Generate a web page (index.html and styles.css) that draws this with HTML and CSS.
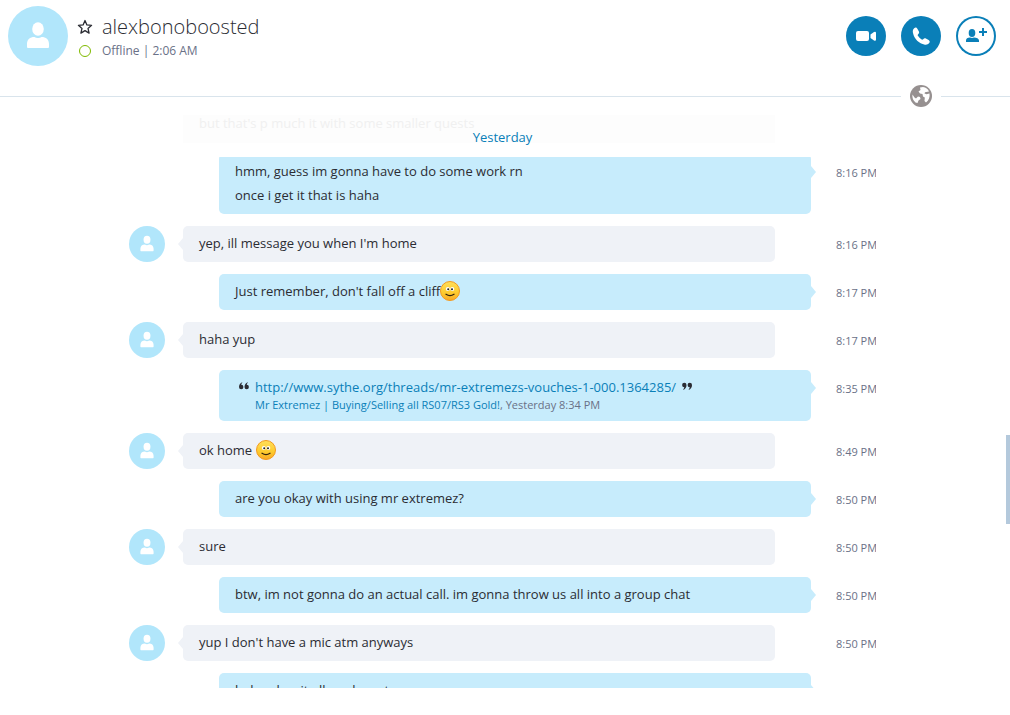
FILE: index.html
```html
<!DOCTYPE html>
<html lang="en">
<head>
    <meta charset="UTF-8">
    <meta name="viewport" content="width=device-width, initial-scale=1.0">
    <title>alexbonoboosted</title>
    <link rel="stylesheet" href="styles.css">
</head>
<body>
    <!-- shared icons -->
    <svg class="defs" width="0" height="0" aria-hidden="true">
        <symbol id="person" viewBox="0 0 60 60">
            <ellipse cx="30" cy="23" rx="5.800" ry="6.700"/>
            <path d="M19 41v-3c0-4.500 3-7 7.500-7 1.200.8 2.300 1 3.500 1s2.300-.2 3.500-1c4.500 0 7.500 2.500 7.500 7v3q0 1-1 1H20q-1 0-1-1z"/>
        </symbol>
        <symbol id="smile" viewBox="0 0 20 20">
            <circle cx="10" cy="10" r="9.500" fill="url(#face)" stroke="#f39a1e"/>
            <ellipse cx="7.800" cy="8" rx="2" ry="1.900" fill="#fff"/>
            <ellipse cx="12.300" cy="8" rx="2" ry="1.900" fill="#fff"/>
            <circle cx="8.200" cy="8.200" r="1" fill="#222"/>
            <circle cx="12" cy="8.200" r="1" fill="#222"/>
            <path d="M6 13.300q4 2.600 8 0" fill="none" stroke="#33230c" stroke-width="1.300" stroke-linecap="round"/>
        </symbol>
        <linearGradient id="face" x1="0" y1="0" x2="0" y2="1">
            <stop offset="0" stop-color="#ffdf5a"/>
            <stop offset=".6" stop-color="#fdcb2e"/>
            <stop offset="1" stop-color="#f9a825"/>
        </linearGradient>
    </svg>

    <header class="header">
        <svg class="avatar avatar-big"><use href="#person"/></svg>
        <div class="contact">
            <button class="star" aria-label="Add to favorites">
                <svg width="16" height="16" viewBox="0 0 16 16"><path d="M8 1.500l1.900 4.400 4.700.4-3.600 3.100 1.100 4.700L8 11.600l-4.100 2.500L5 9.400 1.400 6.300l4.700-.4z" fill="none" stroke="#2b2c33" stroke-width="1.300" stroke-linejoin="round"/></svg>
            </button>
            <h1>alexbonoboosted</h1>
            <span class="status"></span>
            <p>Offline | 2:06 AM</p>
        </div>
        <div class="actions">
            <button class="round" aria-label="Video call">
                <svg width="40" height="40" viewBox="0 0 40 40"><rect x="10" y="15" width="13" height="10" rx="2"/><path d="M24.500 18.500l3.500-2.500q2-.8 2 1v6.500q0 1.800-2 1l-3.500-2.500z"/></svg>
            </button>
            <button class="round" aria-label="Call">
                <svg width="40" height="40" viewBox="0 0 40 40"><path d="M13.200 12.200c1.300-1 2.500-.7 3.300.7l1.400 2.500c.6 1.200 0 2-.8 2.800-.6.600-.4 1.200 0 1.900.8 1.300 1.900 2.400 3.200 3.200.7.400 1.300.5 1.900-.1.800-.8 1.600-1.200 2.700-.6l2.700 1.500c1.300.8 1.500 1.900.6 3-1.100 1.400-2.600 1.900-4.300 1.600-6-1.100-10.600-5.800-11.900-11.700-.4-1.900-.3-3.600 1.200-4.800z"/></svg>
            </button>
            <button class="round outline" aria-label="Add people">
                <svg width="40" height="40" viewBox="0 0 40 40"><ellipse cx="16" cy="17" rx="3.300" ry="4"/><path d="M10 26v-1.500c0-2 1.500-3 4-3 1.500.6 2.500.6 4 0 2.500 0 5 1 5 3V26z"/><path d="M26 12h2v3h3v2h-3v3h-2v-3h-3v-2h3z"/></svg>
            </button>
        </div>
    </header>

    <div class="divider">
        <svg width="22" height="22" viewBox="0 0 22 22">
            <circle cx="11" cy="11" r="11" fill="#969090"/>
            <path d="M10 2.500l3-.5c3 .5 5 2 6 4.500l-4 .7-.5 1.300 2 .8 3-.8c.6 3.500-.7 7-3.500 9l-1.500-1.500.3-3.500-1.800-1-.5-2.500-2.500-.5-1.500-2L10.500 5z" fill="#fff"/>
            <path d="M2.500 9.500l2 3 1.500 1 2-2 2 .5.500 2-2 1.500-1 2.500-2-.5C3 15.500 2 12.500 2.500 9.500z" fill="#fff"/>
        </svg>
    </div>

    <main class="chat">
        <div class="day">
            <div class="ghost">but that's p much it with some smaller quests</div>
            <h2>Yesterday</h2>
        </div>

        <div class="messages">
            <div class="row mine">
                <div class="bubble">hmm, guess im gonna have to do some work rn<br>once i get it that is haha</div>
                <time>8:16 PM</time>
            </div>
            <div class="row">
                <svg class="avatar"><use href="#person"/></svg>
                <div class="bubble">yep, ill message you when I'm home</div>
                <time>8:16 PM</time>
            </div>
            <div class="row mine">
                <div class="bubble">Just remember, don't fall off a cliff<svg class="emoji"><use href="#smile"/></svg></div>
                <time>8:17 PM</time>
            </div>
            <div class="row">
                <svg class="avatar"><use href="#person"/></svg>
                <div class="bubble">haha yup</div>
                <time>8:17 PM</time>
            </div>
            <div class="row mine">
                <div class="bubble quote">
                    <div class="quote-text">
                        <svg width="10" height="8" viewBox="0 0 10 8"><path id="mark" d="M3.500 0Q0 1.500 0 5a2.200 2.200 0 1 0 2.200-2.200Q2.500 1.500 3.500 0zM9 0Q5.500 1.500 5.500 5a2.200 2.200 0 1 0 2.200-2.200Q8 1.500 9 0z"/></svg>
                        <a href="#">http://www.sythe.org/threads/mr-extremezs-vouches-1-000.1364285/</a>
                        <svg width="10" height="8" viewBox="0 0 10 8"><use href="#mark" transform="rotate(180 5 4)"/></svg>
                    </div>
                    <div class="quote-source"><a href="#">Mr Extremez | Buying/Selling all RS07/RS3 Gold!</a>, Yesterday 8:34 PM</div>
                </div>
                <time>8:35 PM</time>
            </div>
            <div class="row">
                <svg class="avatar"><use href="#person"/></svg>
                <div class="bubble">ok home <svg class="emoji"><use href="#smile"/></svg></div>
                <time>8:49 PM</time>
            </div>
            <div class="row mine">
                <div class="bubble">are you okay with using mr extremez?</div>
                <time>8:50 PM</time>
            </div>
            <div class="row">
                <svg class="avatar"><use href="#person"/></svg>
                <div class="bubble">sure</div>
                <time>8:50 PM</time>
            </div>
            <div class="row mine">
                <div class="bubble">btw, im not gonna do an actual call. im gonna throw us all into a group chat</div>
                <time>8:50 PM</time>
            </div>
            <div class="row">
                <svg class="avatar"><use href="#person"/></svg>
                <div class="bubble">yup I don't have a mic atm anyways</div>
                <time>8:50 PM</time>
            </div>
            <div class="row mine">
                <div class="bubble">haha okay it all works out</div>
            </div>
        </div>
    </main>
    <div class="scrollbar"></div>
</body>
</html>
```
FILE: styles.css
```css
* { box-sizing: border-box; }
body { margin: 0; height: 100vh; padding-bottom: 27px; display: flex; flex-direction: column; overflow: hidden; background: #fff; color: #2b2c33; font: 13px/24px "Open Sans", "Noto Sans", sans-serif; }
h1, h2, p { margin: 0; font-weight: normal; }
a { color: #0a7fb8; text-decoration: none; }
button { padding: 0; border: 0; background: none; cursor: pointer; }
svg { display: block; }
.defs { position: absolute; }

/* header */
.header { display: flex; align-items: flex-start; padding: 6px 14px 0 8px; height: 85px; flex: none; }
.avatar { width: 36px; height: 36px; border-radius: 50%; background: #b1e6fb; fill: #fff; flex: none; }
.avatar-big { width: 60px; height: 60px; }
.contact { display: grid; grid-template-columns: 16px 1fr; column-gap: 9px; align-items: center; margin: 7px 0 0 9px; flex: 1; }
.contact h1 { font-size: 20px; line-height: 28px; font-weight: 300; }
.contact p { font-size: 12px; line-height: 20px; color: #6a7187; }
.status { width: 12px; height: 12px; margin-left: 2px; border: 1px solid #7fba00; border-radius: 50%; }
.actions { display: flex; gap: 15px; padding-top: 10px; }
.round { width: 40px; height: 40px; border-radius: 50%; background: #0a7fb8; fill: #fff; }
.outline { background: #fff; fill: #0a7fb8; box-shadow: inset 0 0 0 2px #0a7fb8; }

.divider { display: flex; align-items: center; gap: 9px; flex: none; }
.divider::before, .divider::after { content: ""; height: 1px; background: #d9e4ec; }
.divider::before { flex: 1; }
.divider::after { width: 69px; }

/* conversation */
.chat { display: flex; flex-direction: column; flex: 1; min-height: 0; padding: 8px 134px 0 129px; }
.day { display: grid; height: 42px; flex: none; }
.ghost, .day h2 { grid-area: 1 / 1; }
.ghost { height: 28px; line-height: 16px; margin: 0 101px 0 54px; padding-left: 16px; background: #fdfdfd; color: #f0f0f0; }
.day h2 { padding-top: 10px; text-align: center; font-size: 13px; color: #0a7fb8; }
.messages { flex: 1; min-height: 0; overflow: hidden; }
.row { display: flex; margin-bottom: 12px; }
.row:first-child { margin-top: -3px; }
.bubble { position: relative; flex: 1; min-height: 36px; margin: 0 61px 0 18px; padding: 5px 16px 7px; border-radius: 5px; background: #eff2f7; }
.mine .bubble { margin: 0 25px 0 90px; background: #c7ecfc; }
.bubble::before { content: ""; position: absolute; top: 12px; left: -5px; width: 5px; height: 12px; background: inherit; clip-path: polygon(0 50%, 100% 0, 100% 100%); }
.mine .bubble::before { left: auto; right: -5px; clip-path: polygon(100% 50%, 0 0, 0 100%); }
time { width: 40px; padding-top: 7px; font-size: 11px; color: #6a7187; white-space: nowrap; }
.row:last-child { padding-right: 40px; }
.emoji { display: inline-block; width: 20px; height: 20px; vertical-align: -5px; }

.mine .quote { padding: 7px 20px 8px; line-height: 20px; }
.quote-text { display: flex; gap: 6px; }
.quote-text svg { margin-top: 5px; fill: #2b2c33; }
.quote-source { padding-left: 16px; font-size: 11px; line-height: 16px; color: #6a7187; }

.scrollbar { position: absolute; right: 0; top: 435px; width: 4px; height: 89px; background: #b4c9dc; }
```
